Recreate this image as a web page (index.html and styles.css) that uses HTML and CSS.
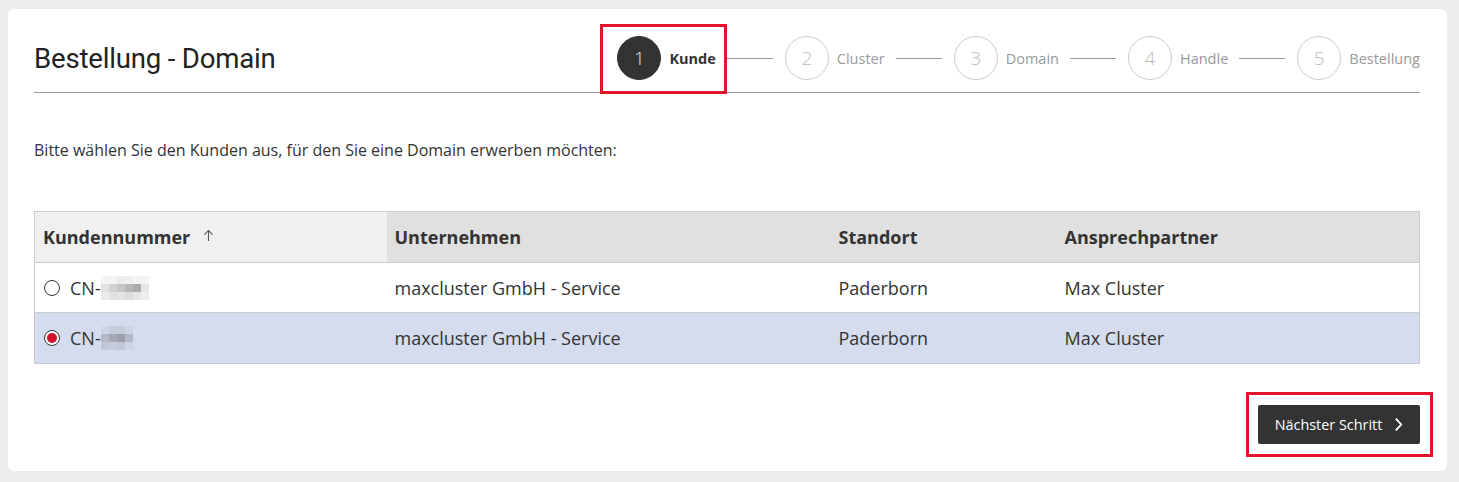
FILE: index.html
```html
<!DOCTYPE html>
<html lang="de">
<head>
<meta charset="utf-8">
<title>Bestellung - Domain</title>
<link rel="stylesheet" href="styles.css">
</head>
<body>
<div class="card">
  <div class="header">
    <h1 class="title">Bestellung - Domain</h1>
    <ol class="steps">
      <li class="step active mark"><span class="num">1</span><span class="label">Kunde</span></li>
      <li class="line"></li>
      <li class="step"><span class="num">2</span><span class="label">Cluster</span></li>
      <li class="line"></li>
      <li class="step"><span class="num">3</span><span class="label">Domain</span></li>
      <li class="line"></li>
      <li class="step"><span class="num">4</span><span class="label">Handle</span></li>
      <li class="line"></li>
      <li class="step"><span class="num">5</span><span class="label">Bestellung</span></li>
    </ol>
  </div>

  <p class="intro">Bitte wählen Sie den Kunden aus, für den Sie eine Domain erwerben möchten:</p>

  <table class="grid">
    <colgroup>
      <col class="c1"><col class="c2"><col class="c3"><col class="c4">
    </colgroup>
    <thead>
      <tr>
        <th class="sorted"><span class="thsort">Kundennummer <svg class="arrow" viewBox="0 0 12 14" width="11" height="13"><path d="M6 13 V1.5 M1.5 6 L6 1.5 L10.5 6" fill="none" stroke="#555" stroke-width="1.2"/></svg></span></th>
        <th>Unternehmen</th>
        <th>Standort</th>
        <th>Ansprechpartner</th>
      </tr>
    </thead>
    <tbody>
      <tr>
        <td><span class="cn"><span class="radio"></span>CN-<span class="blur b1">
          <i class="p t1"></i><i class="p t1"></i><i class="p t2"></i><i class="p t3"></i><i class="p t1"></i><i class="p t1"></i>
          <i class="p m1"></i><i class="p m2"></i><i class="p m3"></i><i class="p m4"></i><i class="p m5"></i><i class="p m6"></i>
          <i class="p l1"></i><i class="p l2"></i><i class="p l3"></i><i class="p l4"></i><i class="p l5"></i><i class="p l6"></i>
        </span></span></td>
        <td>maxcluster GmbH - Service</td>
        <td>Paderborn</td>
        <td>Max Cluster</td>
      </tr>
      <tr class="selected">
        <td><span class="cn"><span class="radio on"></span>CN-<span class="blur b2">
          <i class="p s1"></i><i class="p s2"></i><i class="p s2"></i><i class="p s1"></i>
          <i class="p s3"></i><i class="p s4"></i><i class="p s5"></i><i class="p s3"></i>
          <i class="p s6"></i><i class="p s2"></i><i class="p s6"></i><i class="p s1"></i>
        </span></span></td>
        <td>maxcluster GmbH - Service</td>
        <td>Paderborn</td>
        <td>Max Cluster</td>
      </tr>
    </tbody>
  </table>

  <div class="actions">
    <button class="next mark">Nächster Schritt <svg class="chev" viewBox="0 0 10 16" width="9" height="15"><path d="M2 1.5 L8 8 L2 14.5" fill="none" stroke="#fff" stroke-width="2"/></svg></button>
  </div>
</div>
</body>
</html>
```

FILE: styles.css
```css
* { box-sizing: border-box; }
html, body { margin: 0; padding: 0; }
body {
  background: #ececec;
  font-family: "Open Sans", "Liberation Sans", sans-serif;
  color: #333;
}
.card {
  margin: 9px 12px 11px 8px;
  background: #fff;
  border-radius: 6px;
  padding: 27px 27px 27px 26px;
}
.header {
  display: flex;
  align-items: center;
  justify-content: space-between;
  border-bottom: 1px solid #999;
  padding-bottom: 12px;
}
.title {
  margin: 0;
  font-family: "Roboto", "Open Sans", sans-serif;
  font-weight: 400;
  font-size: 27.6px;
  color: #222;
  letter-spacing: -0.2px;
}
.steps {
  list-style: none;
  margin: 0;
  padding: 0;
  display: flex;
  align-items: center;
}
.step {
  display: flex;
  align-items: center;
  gap: 8px;
}
.num {
  width: 44px;
  height: 44px;
  border-radius: 50%;
  border: 1px solid #ccc;
  display: flex;
  align-items: center;
  justify-content: center;
  font-size: 19px;
  font-weight: 300;
  color: #bbb;
}
.label {
  font-size: 14.5px;
  color: #999;
}
.step.active .num {
  background: #333;
  border-color: #333;
  color: #dfe6f5;
}
.step.active .label {
  font-weight: 700;
  color: #333;
}
.line {
  width: 46px;
  height: 1px;
  background: #999;
  margin: 0 12px 0 11px;
}
.mark { position: relative; }
.step.mark::after {
  content: "";
  position: absolute;
  left: -17px;
  top: -12px;
  right: -11px;
  height: 64px;
  border: 3px solid #e4132b;
  pointer-events: none;
}
.intro {
  margin: 47px 0 0;
  font-size: 16px;
  line-height: 20px;
  color: #333;
}
.grid {
  margin-top: 51px;
  width: 100%;
  border-collapse: collapse;
  table-layout: fixed;
  border: 1px solid #ccc;
  font-size: 18px;
}
.c1 { width: 352px; }
.c2 { width: 444px; }
.c3 { width: 226px; }
.c4 { width: auto; }
.grid th {
  background: #e0e0e0;
  text-align: left;
  font-weight: 700;
  height: 51px;
  padding: 0 8px;
  border-bottom: 1px solid #ccc;
  color: #333;
}
.grid th.sorted {
  background: #f0f0f0;
}
.thsort {
  display: inline-flex;
  align-items: center;
}
.arrow {
  margin-left: 13px;
  margin-top: -4px;
}
.grid td {
  height: 50px;
  padding: 0 8px;
  border-bottom: 1px solid #ccc;
  color: #333;
}
.grid tr:last-child td { border-bottom: 0; height: 51px; }
.grid tr.selected td { background: #d5dcee; }
.cn {
  display: flex;
  align-items: center;
}
.radio {
  width: 16px;
  height: 16px;
  border-radius: 50%;
  border: 1px solid #333;
  background: #fff;
  margin: 0 10px 0 1px;
  display: inline-flex;
  align-items: center;
  justify-content: center;
}
.radio.on::after {
  content: "";
  width: 10px;
  height: 10px;
  border-radius: 50%;
  background: #d0142c;
}
.blur {
  display: inline-grid;
  grid-auto-rows: 8px;
  margin-left: 0;
}
.b1 { grid-template-columns: repeat(6, 8px); }
.b2 { grid-template-columns: repeat(4, 8px); }
.p { display: block; }
.t1 { background: #f4f4f4; }
.t2 { background: #ececec; }
.t3 { background: #efefef; }
.m1 { background: #e3e3e3; }
.m2 { background: #d2d2d2; }
.m3 { background: #c6c6c6; }
.m4 { background: #b8b8b8; }
.m5 { background: #ababab; }
.m6 { background: #e6e6e6; }
.l1 { background: #ebebeb; }
.l2 { background: #e1e1e1; }
.l3 { background: #e4e4e4; }
.l4 { background: #dcdcdc; }
.l5 { background: #e6e6e6; }
.l6 { background: #efefef; }
.s1 { background: #cfd5e5; }
.s2 { background: #c6ccdc; }
.s3 { background: #b4b9c9; }
.s4 { background: #a5a9b6; }
.s5 { background: #9b9fac; }
.s6 { background: #c0c6d6; }
.actions {
  display: flex;
  justify-content: flex-end;
  margin-top: 41px;
}
.next {
  background: #333;
  color: #fff;
  border: 0;
  border-radius: 2px;
  height: 39px;
  width: 162px;
  font-family: "Open Sans", "Liberation Sans", sans-serif;
  font-size: 14.4px;
  display: flex;
  align-items: center;
  justify-content: center;
  gap: 12px;
  padding: 0;
}
.next.mark::after {
  content: "";
  position: absolute;
  left: -12px;
  top: -13px;
  right: -13px;
  bottom: -13px;
  border: 3px solid #e4132b;
  pointer-events: none;
}
.chev { display: block; }
```
